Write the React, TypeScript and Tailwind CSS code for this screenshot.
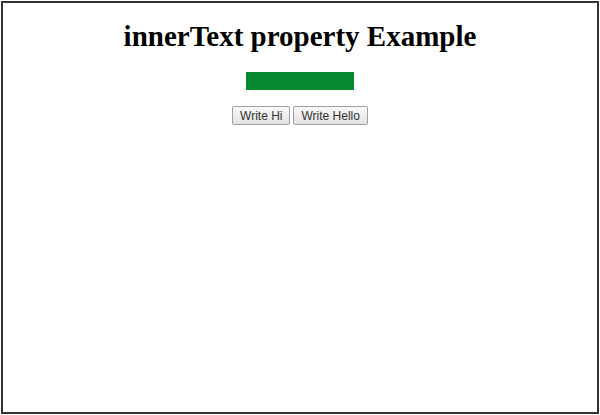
export default function App() {
  return (
    <div className="h-[415px] w-[600px] bg-white p-px">
      <div className="flex h-full w-full flex-col items-center border-2 border-[#333]">
        <h1 className="mt-[15px] text-[29px] font-bold leading-[36px] text-black [font-family:'Liberation_Serif',serif]">
          innerText property Example
        </h1>
        <div className="mt-[18px] h-[18px] w-[108px] bg-[#058a2f]" />
        <div className="mt-[16px] flex gap-[3px] [font-family:'Liberation_Sans',sans-serif]">
          <button className="h-[19px] rounded-[2px] border border-[#a0a0a0] bg-gradient-to-b from-[#fafafa] to-[#e2e2e2] px-[7px] text-[12px] leading-none text-[#333]">
            Write Hi
          </button>
          <button className="h-[19px] rounded-[2px] border border-[#a0a0a0] bg-gradient-to-b from-[#fafafa] to-[#e2e2e2] px-[7px] text-[12px] leading-none text-[#333]">
            Write Hello
          </button>
        </div>
      </div>
    </div>
  );
}
